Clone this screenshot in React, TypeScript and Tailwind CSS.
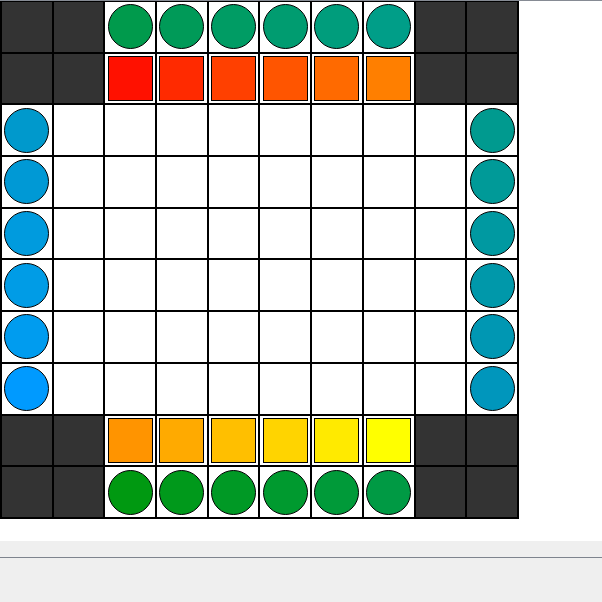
import React from "react";

const topDots = ["#009a4c", "#009a58", "#009c64", "#009c70", "#009d7c", "#009e88"];
const bottomDots = ["#009911", "#00991b", "#009925", "#009a2f", "#009a39", "#009a44"];
const leftDots = ["#0099cc", "#0099d5", "#009bde", "#009ce6", "#009cef", "#009aff"];
const rightDots = ["#009a8f", "#009a98", "#0099a1", "#0098aa", "#0097b3", "#0096bc"];
const topSquares = ["#ff1100", "#ff2a00", "#ff4000", "#ff5500", "#ff6a00", "#ff7f00"];
const bottomSquares = ["#ff9400", "#ffaa00", "#ffbf00", "#ffd400", "#ffea00", "#ffff00"];

type Cell = { kind: "dark" | "empty" | "dot" | "square"; color?: string };

function cellAt(r: number, c: number): Cell {
  const corner = (r < 2 || r > 7) && (c < 2 || c > 7);
  if (corner) return { kind: "dark" };
  if (r === 0) return { kind: "dot", color: topDots[c - 2] };
  if (r === 9) return { kind: "dot", color: bottomDots[c - 2] };
  if (r === 1) return { kind: "square", color: topSquares[c - 2] };
  if (r === 8) return { kind: "square", color: bottomSquares[c - 2] };
  if (c === 0) return { kind: "dot", color: leftDots[r - 2] };
  if (c === 9) return { kind: "dot", color: rightDots[r - 2] };
  return { kind: "empty" };
}

function BoardCell({ cell }: { cell: Cell }) {
  if (cell.kind === "dark") return <div className="bg-[#333333]" />;
  return (
    <div className="flex items-center justify-center bg-white">
      {cell.kind === "dot" && (
        <div className="h-[45px] w-[45px] rounded-full border border-black" style={{ backgroundColor: cell.color }} />
      )}
      {cell.kind === "square" && (
        <div className="h-[45px] w-[45px] border-[1.5px] border-black" style={{ backgroundColor: cell.color }} />
      )}
    </div>
  );
}

export default function App() {
  const rows = Array.from({ length: 10 }, (_, r) => r);
  return (
    <div className="flex h-[602px] w-[602px] flex-col overflow-hidden bg-white">
      <div className="h-[1px] w-full shrink-0 bg-[#868b94]" />
      <div className="grid w-[519px] shrink-0 grid-cols-[repeat(10,49.7px)] grid-rows-[repeat(10,49.7px)] gap-[2px] bg-black px-[2px] pt-[1px] pb-[2px]">
        {rows.map((r) => rows.map((c) => <BoardCell key={`${r}-${c}`} cell={cellAt(r, c)} />))}
      </div>
      <div className="h-[22px] shrink-0" />
      <div className="h-[16px] shrink-0 bg-[#efefef]" />
      <div className="h-[1px] shrink-0 bg-[#7e848e]" />
      <div className="flex-1 bg-[#efefef]" />
    </div>
  );
}
